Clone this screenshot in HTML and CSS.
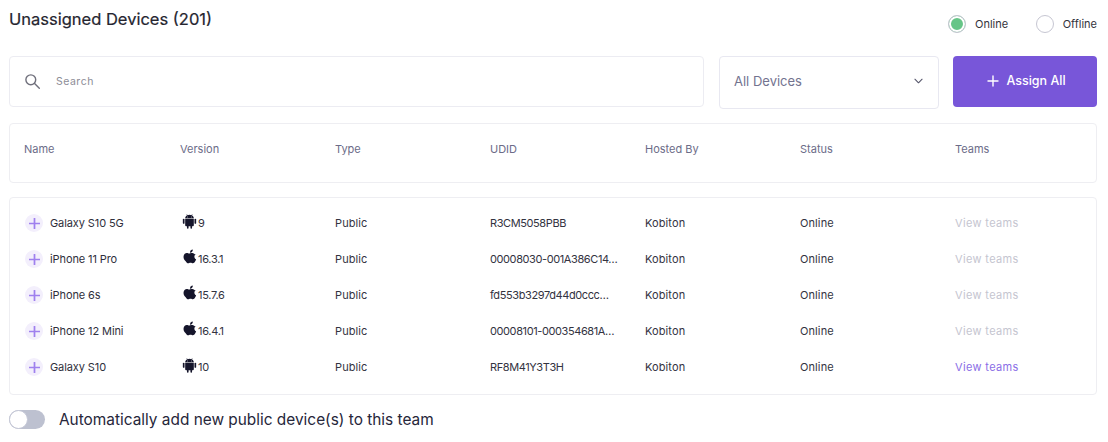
FILE: index.html
```html
<!DOCTYPE html>
<html lang="en">
<head>
<meta charset="utf-8">
<title>Unassigned Devices</title>
<link rel="stylesheet" href="styles.css">
</head>
<body>
<svg class="defs" width="0" height="0" aria-hidden="true">
  <symbol id="android" viewBox="0 0 16 16">
    <path d="M3.4 5.6h9.2v6.9c0 .6-.4 1-1 1h-.9v1.9a.85.85 0 0 1-1.7 0v-1.9H7v1.9a.85.85 0 0 1-1.7 0v-1.9h-.9c-.6 0-1-.4-1-1z"/>
    <path d="M3.4 5.1C3.5 3.6 4.3 2.5 5.5 1.9L4.8.7l.35-.2.75 1.25a5.6 5.6 0 0 1 4.2 0L10.85.5l.35.2-.7 1.2c1.2.6 2 1.7 2.1 3.2zM6 3.2a.5.5 0 1 0 0 1 .5.5 0 0 0 0-1zm4 0a.5.5 0 1 0 0 1 .5.5 0 0 0 0-1z"/>
    <rect x="0.9" y="5.6" width="1.8" height="5.4" rx=".9"/>
    <rect x="13.3" y="5.6" width="1.8" height="5.4" rx=".9"/>
  </symbol>
  <symbol id="apple" viewBox="0 0 16 16">
    <path d="M11.2 0c.1 1-.3 1.9-.8 2.6-.6.7-1.5 1.2-2.4 1.1-.1-.9.3-1.9.8-2.5C9.400.5 10.400.1 11.200 0z"/>
    <path d="M14.600 5.400c-1 .7-1.600 1.600-1.600 2.800 0 1.400.8 2.400 2 3-.3.9-.7 1.700-1.200 2.500-.7 1-1.400 2-2.500 2-1 0-1.400-.6-2.700-.6s-1.700.6-2.700.6c-1.100 0-1.900-1.100-2.600-2.100C1.300 12.200.6 10.200.6 8.400c0-2.900 1.900-4.400 3.700-4.400 1.100 0 2 .7 2.700.7.7 0 1.700-.8 3-.8 1 0 2.600.4 3.500 1.500z"/>
  </symbol>
</svg>

<header class="top">
  <h1 class="title">Unassigned Devices (201)</h1>
  <div class="radios">
    <span class="radio-item"><span class="radio radio-on"></span>Online</span>
    <span class="radio-item"><span class="radio"></span>Offline</span>
  </div>
</header>

<section class="filters">
  <div class="search">
    <svg class="search-icon" viewBox="0 0 18 18" fill="none" stroke="#70707c" stroke-width="1.5" stroke-linecap="round"><circle cx="7.200" cy="7.200" r="5.200"/><path d="M11.200 11.200l5 5"/></svg>
    <span class="search-text">Search</span>
  </div>
  <div class="select">
    <span>All Devices</span>
    <svg class="chev" viewBox="0 0 10 6" fill="none" stroke="#55556a" stroke-width="1.200" stroke-linecap="round" stroke-linejoin="round"><path d="M1 1l4 4 4-4"/></svg>
  </div>
  <button class="assign" type="button">
    <svg class="assign-plus" viewBox="0 0 12 12" stroke="#fff" stroke-width="1.400" stroke-linecap="round"><path d="M6 1v10M1 6h10"/></svg>
    Assign All
  </button>
</section>

<div class="table-head">
  <span>Name</span><span>Version</span><span>Type</span><span>UDID</span><span>Hosted By</span><span>Status</span><span>Teams</span>
</div>

<div class="table-body">
  <div class="row">
    <span class="name"><span class="add"><svg viewBox="0 0 12 12"><path d="M6 .5v11M.5 6h11"/></svg></span>Galaxy S10 5G</span>
    <span class="ver"><svg class="os os-android"><use href="#android"/></svg>9</span>
    <span>Public</span><span class="udid">R3CM5058PBB</span><span>Kobiton</span><span>Online</span><span class="teams">View teams</span>
  </div>
  <div class="row">
    <span class="name"><span class="add"><svg viewBox="0 0 12 12"><path d="M6 .5v11M.5 6h11"/></svg></span>iPhone 11 Pro</span>
    <span class="ver"><svg class="os os-apple"><use href="#apple"/></svg>16.3.1</span>
    <span>Public</span><span class="udid">00008030-001A386C14…</span><span>Kobiton</span><span>Online</span><span class="teams">View teams</span>
  </div>
  <div class="row">
    <span class="name"><span class="add"><svg viewBox="0 0 12 12"><path d="M6 .5v11M.5 6h11"/></svg></span>iPhone 6s</span>
    <span class="ver"><svg class="os os-apple"><use href="#apple"/></svg>15.7.6</span>
    <span>Public</span><span class="udid">fd553b3297d44d0ccc…</span><span>Kobiton</span><span>Online</span><span class="teams">View teams</span>
  </div>
  <div class="row">
    <span class="name"><span class="add"><svg viewBox="0 0 12 12"><path d="M6 .5v11M.5 6h11"/></svg></span>iPhone 12 Mini</span>
    <span class="ver"><svg class="os os-apple"><use href="#apple"/></svg>16.4.1</span>
    <span>Public</span><span class="udid">00008101-000354681A…</span><span>Kobiton</span><span>Online</span><span class="teams">View teams</span>
  </div>
  <div class="row">
    <span class="name"><span class="add"><svg viewBox="0 0 12 12"><path d="M6 .5v11M.5 6h11"/></svg></span>Galaxy S10</span>
    <span class="ver"><svg class="os os-android"><use href="#android"/></svg>10</span>
    <span>Public</span><span class="udid">RF8M41Y3T3H</span><span>Kobiton</span><span>Online</span><span class="teams teams-hover">View teams</span>
  </div>
</div>

<footer class="auto">
  <span class="toggle"><span class="knob"></span></span>
  <span class="auto-text">Automatically add new public device(s) to this team</span>
</footer>
</body>
</html>
```

FILE: styles.css
```css
* { box-sizing: border-box; }
html, body { margin: 0; height: 442px; overflow: hidden; background: #fff; }
body {
  padding: 0 11px 0 9px;
  font-family: Inter, "Noto Sans", sans-serif;
  color: #26263a;
  font-size: 11px;
}
.defs { position: absolute; }
.top { display: flex; justify-content: space-between; height: 56px; }
.title {
  margin: 7px 0 0 0;
  font-size: 16.500px;
  line-height: 24px;
  font-weight: 400;
  color: #25252f;
  -webkit-text-stroke: 0.2px #25252f;
}
.radios { display: flex; gap: 28px; margin-top: 15px; height: 18px; }
.radio-item { display: flex; align-items: center; gap: 8.500px; font-size: 11px; color: #33333c; }
.radio { width: 18px; height: 18px; border: 1px solid #c6c6d2; border-radius: 50%; display: block; background: #fff; }
.radio-on { background: #66c587; box-shadow: inset 0 0 0 2px #fff; }
.filters { display: flex; align-items: flex-start; }
.search {
  width: 695px; height: 51px; display: flex; align-items: center;
  border: 1px solid #ececf2; border-radius: 4px; padding-left: 14px;
}
.search-icon { width: 17px; height: 17px; margin-right: 15px; }
.search-text { font-size: 10.500px; color: #8d8d97; letter-spacing: .5px; }
.select {
  width: 220px; height: 53px; margin-left: 15px; padding: 0 15px 3px 14px;
  display: flex; align-items: center; justify-content: space-between;
  border: 1px solid #e8e8f1; border-radius: 4px;
  font-size: 13px; color: #73738f;
}
.chev { width: 9px; height: 6px; }
.assign {
  width: 144px; height: 51px; margin-left: 14px; border: 0; border-radius: 4px; padding: 0 0 2px 3px;
  background: #7856d9; color: #fff; font: 500 12.500px Inter, sans-serif;
  display: flex; align-items: center; justify-content: center; gap: 7px;
}
.assign-plus { width: 12px; height: 12px; }
.table-head {
  margin-top: 14px; height: 60px; border: 1px solid #eeeef2; border-radius: 4px;
  display: grid; grid-template-columns: repeat(7, 155px); padding: 17px 0 0 14px;
  font-size: 11px; line-height: 16px; color: #6c6c88;
}
.table-head span + span { padding-left: 1px; }
.table-body {
  margin-top: 14px; height: 198px; border: 1px solid #eeeef2; border-radius: 4px;
  padding: 7px 0 0 15px;
}
.row {
  display: grid; grid-template-columns: repeat(7, 155px); height: 36px; align-items: center;
  font-size: 11px; color: #33333f; letter-spacing: .1px;
}
.name { display: flex; align-items: center; gap: 7px; color: #2f2f3c; letter-spacing: -.1px; }
.add {
  width: 18px; height: 18px; border-radius: 50%; background: #f3effc;
  display: flex; align-items: center; justify-content: center;
}
.add svg { width: 11px; height: 11px; stroke: #9f80ee; stroke-width: 1.900; stroke-linecap: round; }
.ver { display: flex; align-items: center; gap: 1px; letter-spacing: -.3px; }
.os { fill: #15152b; display: block; }
.os-android { width: 15px; height: 16px; margin: -4px 0 0 2px; }
.os-apple { width: 14px; height: 15px; margin: -5px 0 0 3px; }
.udid { letter-spacing: -.4px; }
.teams { color: #c5c5d0; letter-spacing: .35px; }
.teams-hover { color: #8a6ee6; }
.auto { margin-top: 14px; display: flex; align-items: center; gap: 14px; height: 20px; }
.toggle {
  width: 36px; height: 19px; border-radius: 10px; background: #bdc1d0; display: block; position: relative;
}
.knob {
  position: absolute; left: 0; top: 0; width: 19px; height: 19px; border-radius: 50%;
  background: #fff; border: 1px solid #c4c7d6;
}
.auto-text { font-size: 15.400px; color: #26263a; }
```
